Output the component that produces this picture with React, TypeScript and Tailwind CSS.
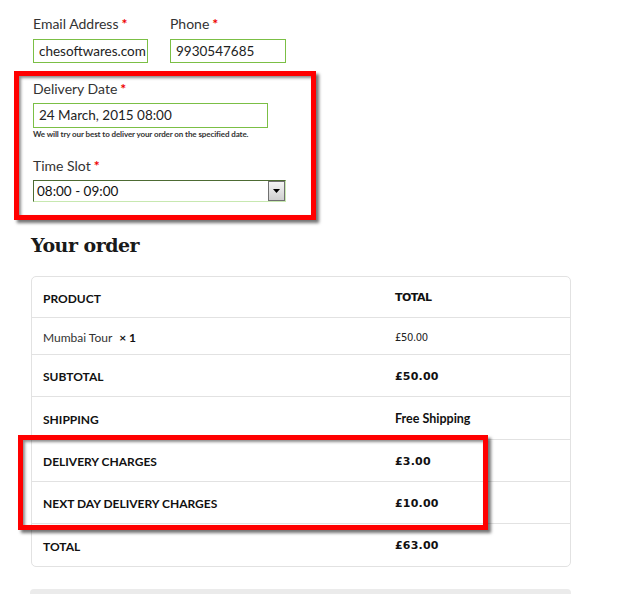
import React from 'react';

const rows = [
  { label: 'SUBTOTAL', value: '£50.00', h: 'h-[42px]' },
  { label: 'SHIPPING', value: 'Free Shipping', h: 'h-[43px]', sans: true },
  { label: 'DELIVERY CHARGES', value: '£3.00', h: 'h-[42px]' },
  { label: 'NEXT DAY DELIVERY CHARGES', value: '£10.00', h: 'h-[42px]' },
  { label: 'TOTAL', value: '£63.00', h: 'h-[42px]' },
];

const Req = () => <span className="text-[#ee0000] ml-[3px] font-bold">*</span>;

const App: React.FC = () => {
  return (
    <div className="relative w-[617px] h-[594px] bg-white overflow-hidden font-['Lato',sans-serif] text-[#333]">
      {/* contact fields */}
      <div className="flex gap-[22px] pl-[33px] pt-[15px]">
        <div className="w-[115px]">
          <label className="block text-[14px] leading-[18px] text-[#333]">
            Email Address<Req />
          </label>
          <div className="mt-[6px] h-[24px] border border-[#7bbf45] px-[5px] text-[13.5px] leading-[22px] text-[#222]">
            chesoftwares.com
          </div>
        </div>
        <div className="w-[116px]">
          <label className="block text-[14px] leading-[18px] text-[#333]">
            Phone<Req />
          </label>
          <div className="mt-[6px] h-[24px] border border-[#7bbf45] px-[5px] text-[13.5px] leading-[22px] text-[#222]">
            9930547685
          </div>
        </div>
      </div>

      {/* delivery box (highlighted) */}
      <div className="ml-[14px] mt-[8px] w-[302px] h-[149px] border-[5px] border-[#ff0000] shadow-[3px_3px_3px_rgba(0,0,0,0.55),inset_2px_2px_3px_rgba(0,0,0,0.45)] pl-[14px] pt-[4px]">
        <label className="block text-[14px] leading-[18px]">
          Delivery Date<Req />
        </label>
        <div className="mt-[5px] w-[235px] h-[25px] border border-[#7bbf45] px-[5px] text-[13.5px] leading-[23px] text-[#222]">
          24 March, 2015 08:00
        </div>
        <p className="mt-0 text-[8px] leading-[12px] font-bold text-[#333] tracking-[-0.1px]">
          We will try our best to deliver your order on the specified date.
        </p>
        <label className="block mt-[17px] text-[14px] leading-[18px]">
          Time Slot<Req />
        </label>
        <div className="mt-[5px] w-[253px] h-[22px] flex border-t border-l border-t-[#4d6b33] border-l-[#4d6b33] border-b border-r border-b-[#c7e8b0] border-r-[#c7e8b0]">
          <div className="flex-1 px-[3px] text-[13.5px] leading-[20px] text-[#111]">08:00 - 09:00</div>
          <div className="w-[17px] h-[20px] bg-gradient-to-b from-[#f4f4f4] to-[#cfcfcf] border border-[#707070] flex items-center justify-center">
            <svg width="7" height="4" viewBox="0 0 7 4">
              <path d="M0 0h7L3.5 4z" fill="#000" />
            </svg>
          </div>
        </div>
      </div>

      {/* order */}
      <h3 className="ml-[31px] mt-[12px] text-[19px] leading-[26px] font-bold font-['DejaVu_Serif',serif] text-[#1a1a1a] tracking-[-0.5px]">
        Your order
      </h3>

      <div className="ml-[31px] mt-[18px] w-[540px] border border-[#e2e2e2] rounded-[5px] text-[12px]">
        <div className="flex items-center h-[41px] pt-[3px] border-b border-[#e2e2e2]">
          <div className="w-[353px] pl-[11px] font-bold text-[#111]">PRODUCT</div>
          <div className="pl-[10px] font-bold text-[#111] font-['DejaVu_Sans',sans-serif] text-[11px] tracking-[-0.5px]">TOTAL</div>
        </div>
        <div className="flex items-center h-[37px] pt-[3px] border-b border-[#e2e2e2]">
          <div className="w-[353px] pl-[11px] text-[#333]">
            Mumbai Tour <strong className="ml-[4px] text-[#111]">× 1</strong>
          </div>
          <div className="pl-[10px] font-['DejaVu_Sans',sans-serif] text-[10px] tracking-[-0.4px] text-[#222]">£50.00</div>
        </div>
        {rows.map((r, i) => (
          <div
            key={r.label}
            className={`flex items-center pt-[3px] ${r.h} ${i < rows.length - 1 ? 'border-b border-[#e2e2e2]' : ''}`}
          >
            <div className="w-[353px] pl-[11px] font-bold text-[#111]">{r.label}</div>
            <div
              className={
                r.sans
                  ? 'pl-[10px] font-bold text-[#111] text-[12.5px]'
                  : "pl-[10px] font-bold text-[#111] font-['DejaVu_Sans',sans-serif] text-[11px] tracking-[0.2px]"
              }
            >
              {r.value}
            </div>
          </div>
        ))}
      </div>

      <div className="ml-[30px] mt-[22px] w-[541px] h-[20px] bg-[#ebebeb] rounded-t-[4px]" />

      {/* annotation over charges rows */}
      <div className="absolute left-[18px] top-[435px] w-[470px] h-[95px] border-[5px] border-[#ff0000] shadow-[3px_3px_3px_rgba(0,0,0,0.55),inset_2px_2px_3px_rgba(0,0,0,0.45)]" />
    </div>
  );
};

export default App;
